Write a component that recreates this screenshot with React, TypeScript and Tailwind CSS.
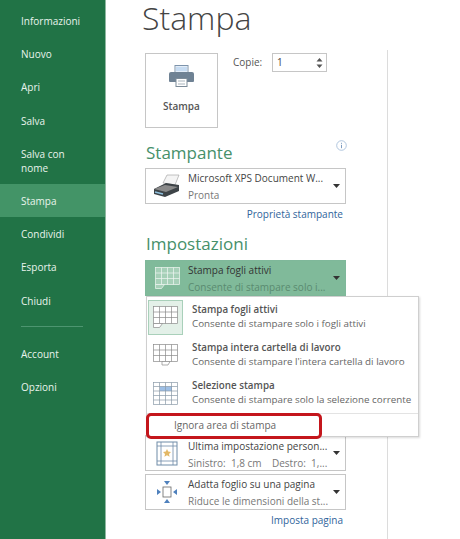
import React from "react";

const font = { fontFamily: '"Open Sans", "Noto Sans", sans-serif' };

function Caret() {
  return (
    <svg width="9" height="6" viewBox="0 0 9 6" className="shrink-0">
      <path d="M1 1h7L4.5 5z" fill="#333" />
    </svg>
  );
}

function NavItem({ label, active }: { label: React.ReactNode; active?: boolean }) {
  return (
    <div className={`flex h-[33.3px] shrink-0 items-center pl-[21px] text-[10px] leading-[14px] text-[#e9f4ed] ${active ? "bg-[#439467]" : ""}`}>
      {label}
    </div>
  );
}

function Grid({ kind, onGreen }: { kind: "sheet" | "book" | "sel"; onGreen?: boolean }) {
  const stroke = onGreen ? "#f1f7f3" : kind === "sel" ? "#8a9aa8" : "#8a8a8a";
  const fill = onGreen ? "#a6d0b8" : "#fff";
  if (kind === "sel") {
    return (
      <svg width="25" height="23" viewBox="0 0 25 23">
        <rect x="0.5" y="0.5" width="24" height="22" fill="#fff" />
        <rect x="7" y="4.5" width="12" height="4.5" fill="#9dbfe6" />
        <g stroke={stroke} strokeWidth="0.7" fill="none">
          <rect x="0.5" y="0.5" width="24" height="22" />
          <path d="M6.5 .5v22M12.5 .5v22M18.5 .5v22M.5 4.5h24M.5 9h24M.5 13.5h24M.5 18h24" />
        </g>
      </svg>
    );
  }
  return (
    <svg width="25" height="23" viewBox="0 0 25 23">
      <g stroke={stroke} strokeWidth="0.7" fill={fill}>
        <rect x="0.5" y="0.5" width="24" height="17" />
        <path d="M6.5 .5v17M12.5 .5v17M18.5 .5v17M.5 6h24M.5 11.5h24" fill="none" />
        <path d={kind === "book" ? "M9 17.5v3.5h6l2-3.5z" : "M.5 17.5v4h6l3-4z"} />
      </g>
    </svg>
  );
}

function Dropdown({ icon, title, sub, green, low }: { icon: React.ReactNode; title: string; sub: string; green?: boolean; low?: boolean }) {
  return (
    <div className={`flex h-[36px] w-[201px] items-center border ${green ? "border-[#7fb89a] bg-[#80ba9a]" : "border-[#c6c6c6] bg-white"}`}>
      <div className="flex w-[42px] shrink-0 justify-center">{icon}</div>
      <div className={`min-w-0 flex-1 text-[10px] leading-[17px] ${low ? "pt-[4px]" : "pt-[1px]"}`}>
        <div className={`whitespace-pre ${green ? "text-[#333]" : "text-[#444]"}`}>{title}</div>
        <div className={`whitespace-pre ${green ? "text-[#5a8a70]" : "text-[#777]"}`}>{sub}</div>
      </div>
      <div className="pr-[4px]"><Caret /></div>
    </div>
  );
}

function MenuItem({ icon, title, sub, selected }: { icon: React.ReactNode; title: string; sub: string; selected?: boolean }) {
  return (
    <div className="flex h-[38px] items-center">
      <div className="flex w-[37px] shrink-0 justify-center">
        <div className={`flex h-[35px] w-[35px] items-center justify-center ${selected ? "border border-[#a9d0ba] bg-[#e3f0e8]" : ""}`}>{icon}</div>
      </div>
      <div className="pl-[8px] text-[9.8px] leading-[14px] whitespace-nowrap">
        <div className="font-semibold text-[#555]">{title}</div>
        <div className="text-[#666]">{sub}</div>
      </div>
    </div>
  );
}

export default function App() {
  return (
    <div className="flex h-[539px] w-[460px] overflow-hidden bg-white" style={font}>
      <aside className="flex h-full w-[106px] shrink-0 flex-col border-r border-[#8fb8a1] bg-[#217346] pt-[4px]">
        <NavItem label="Informazioni" />
        <NavItem label="Nuovo" />
        <NavItem label="Apri" />
        <NavItem label="Salva" />
        <div className="flex h-[47px] shrink-0 items-center pl-[21px] text-[10px] leading-[14px] text-[#e9f4ed]">Salva con<br />nome</div>
        <NavItem label="Stampa" active />
        <NavItem label="Condividi" />
        <NavItem label="Esporta" />
        <NavItem label="Chiudi" />
        <div className="ml-[21px] mt-[9px] mb-[10px] h-px w-[62px] shrink-0 bg-[#4d9570]" />
        <NavItem label="Account" />
        <NavItem label="Opzioni" />
      </aside>

      <main className="relative flex-1">
        <div className="flex h-full">
          <div className="w-[281px] shrink-0 pl-[39px]">
            <h1 className="ml-[-3px] h-[53px] text-[32px] leading-[36px] font-light text-[#444]">Stampa</h1>

            <div className="flex">
              <div className="flex h-[75px] w-[73px] flex-col items-center border border-[#c6c6c6] pt-[11px]">
                <svg width="25" height="22" viewBox="0 0 25 22">
                  <rect x="6" y="0.5" width="13" height="8" fill="#fff" stroke="#7d93ab" />
                  <rect x="7" y="1.5" width="11" height="5" fill="#c7dcf2" />
                  <path d="M0 9a2 2 0 0 1 2-2h21a2 2 0 0 1 2 2v7a1 1 0 0 1-1 1H1a1 1 0 0 1-1-1z" fill="#6f8294" />
                  <rect x="7" y="13.5" width="11" height="8" fill="#fff" stroke="#7d8c99" />
                  <path d="M9 16h7M9 19h7" stroke="#a9b4bd" />
                </svg>
                <div className="mt-[12px] text-[10px] leading-[15px] font-semibold text-[#555]">Stampa</div>
              </div>
              <div className="ml-[15px] w-[39px] pt-[1px] text-[10px] leading-[16px] text-[#555]">Copie:</div>
              <div className="flex h-[19px] w-[55px] items-center justify-between border border-[#c6c6c6] pl-[4px] pr-[3px] text-[10px] text-[#444]">
                <span>1</span>
                <svg width="7" height="12" viewBox="0 0 7 12"><path d="M3.5 1L6.5 4.5h-6zM3.5 11L.5 7.5h6z" fill="#555" /></svg>
              </div>
            </div>

            <div className="relative mt-[12px] h-[28px] w-[201px]">
              <h2 className="ml-[1px] text-[17px] leading-[26px] font-normal text-[#46906a]">Stampante</h2>
              <svg width="11" height="11" viewBox="0 0 11 11" className="absolute right-[-1px] top-[0px]">
                <circle cx="5.5" cy="5.5" r="4.8" fill="none" stroke="#9db8d6" strokeWidth="0.8" />
                <path d="M5.5 4.8v3.4M5.5 2.8v1" stroke="#7d9cc0" />
              </svg>
            </div>
            <Dropdown
              title="Microsoft XPS Document W..."
              sub="Pronta"
              icon={
                <svg width="28" height="24" viewBox="0 0 28 24">
                  <path d="M10 9l4-8h12l-4 10z" fill="#f4f4f4" stroke="#9a9a9a" strokeWidth="0.6" />
                  <path d="M1 15l12-6 13 2v6l-14 6-11-3z" fill="#3d4347" />
                  <path d="M1 15l11-4 13 2-12 5z" fill="#8a8a8a" />
                  <path d="M2 18l8 2" stroke="#8fc0dd" strokeWidth="1.5" />
                </svg>
              }
            />
            <div className="mt-[2px] h-[17px] w-[198px] text-right text-[10px] leading-[17px] text-[#30649b]">Proprietà stampante</div>

            <h2 className="mt-[8px] ml-[1px] h-[29px] text-[17px] leading-[26px] font-normal text-[#46906a]">Impostazioni</h2>
            <Dropdown green title="Stampa fogli attivi" sub="Consente di stampare solo i..." icon={<Grid kind="sheet" onGreen />} />

            <div className="mt-[139px]">
              <Dropdown
                low
                title="Ultima impostazione person..."
                sub="Sinistro:  1,8 cm    Destro:  1,..."
                icon={
                  <svg width="22" height="25" viewBox="0 0 22 25">
                    <rect x="1" y="1" width="20" height="23" fill="#fff" stroke="#6f8ca8" />
                    <path d="M5 1v23M17 1v23M1 5h20M1 20h20" stroke="#6f8ca8" strokeWidth="0.8" />
                    <path d="M11 8l1.2 2.6 2.8.3-2 2 .6 2.8-2.6-1.4-2.6 1.4.6-2.8-2-2 2.8-.3z" fill="#e3b866" />
                  </svg>
                }
              />
              <div className="mt-[3px]">
                <Dropdown
                  title="Adatta foglio su una pagina"
                  sub="Riduce le dimensioni della st..."
                  icon={
                    <svg width="26" height="26" viewBox="0 0 26 26">
                      <rect x="9" y="8" width="8" height="10" fill="#fff" stroke="#666" strokeWidth="0.8" />
                      <g fill="#4f81bd">
                        <path d="M13 6L10 2h6zM13 20l3 4h-6zM7 13L3 10v6zM19 13l4-3v6z" />
                      </g>
                    </svg>
                  }
                />
              </div>
              <div className="mt-[2px] w-[198px] text-right text-[10px] leading-[17px] text-[#30649b]">Imposta pagina</div>
            </div>
          </div>
          <div className="mt-[50px] h-[489px] w-px bg-[#dcdcdc]" />
        </div>

        <div className="absolute left-[40px] top-[296px] h-[141px] w-[273px] border border-[#cfcfcf] bg-white shadow-[1px_1px_2px_rgba(0,0,0,0.15)]">
          <div className="pt-[1px]">
            <MenuItem selected icon={<Grid kind="sheet" />} title="Stampa fogli attivi" sub="Consente di stampare solo i fogli attivi" />
            <MenuItem icon={<Grid kind="book" />} title="Stampa intera cartella di lavoro" sub="Consente di stampare l'intera cartella di lavoro" />
            <MenuItem icon={<Grid kind="sel" />} title="Selezione stampa" sub="Consente di stampare solo la selezione corrente" />
          </div>
          <div className="mt-[1px] flex h-[23px] items-center border-t border-[#e3e3e3] pl-[27px] text-[10px] text-[#666]">Ignora area di stampa</div>
        </div>
        <div className="absolute left-[40px] top-[413px] h-[26px] w-[176px] rounded-[5px] border-[3px] border-[#c4161c]" />
      </main>
    </div>
  );
}
